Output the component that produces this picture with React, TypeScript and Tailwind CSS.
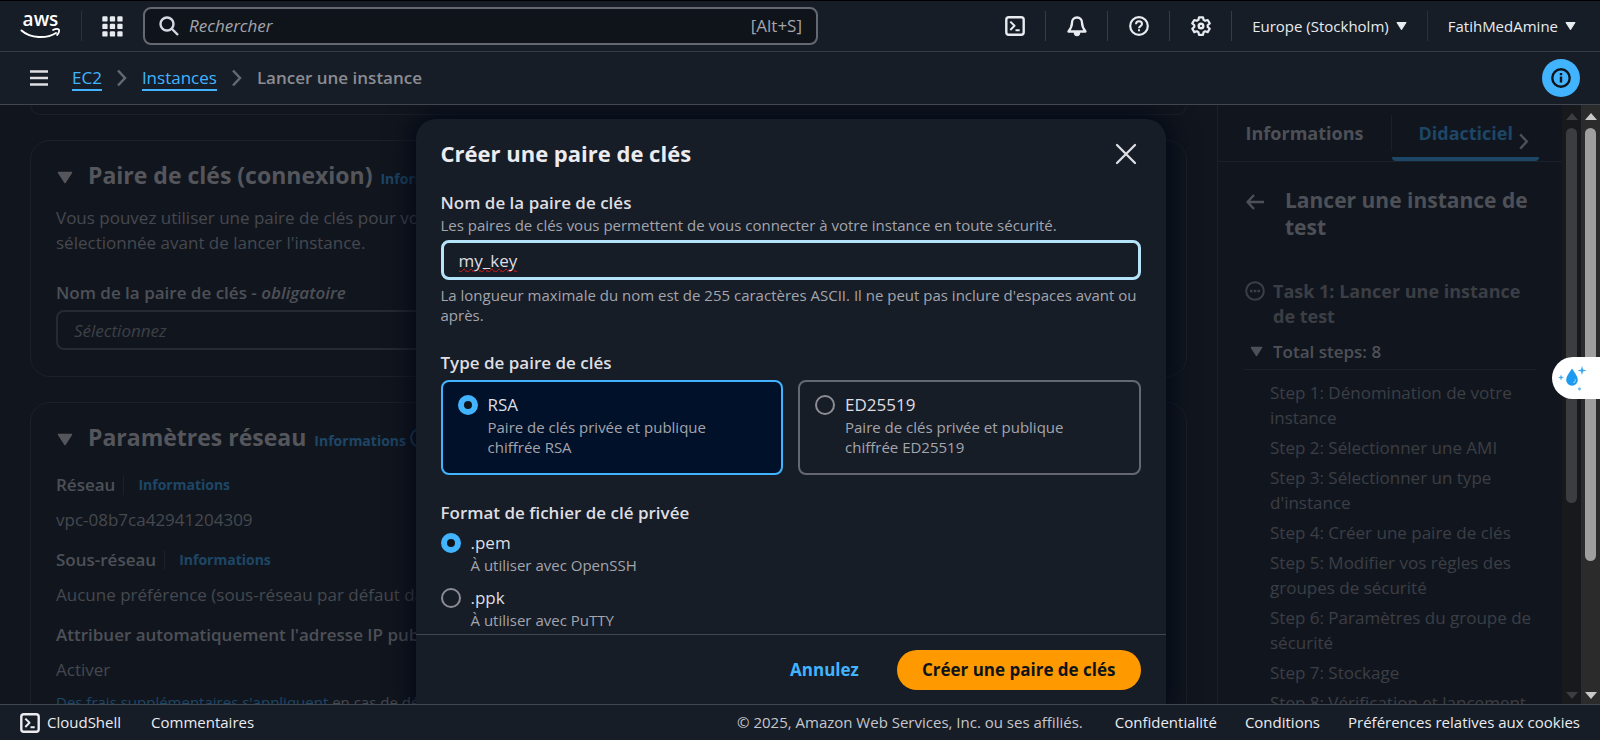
import { useState } from 'react';
import type { ReactNode } from 'react';

const steps = [
  'Step 1: Dénomination de votre instance',
  'Step 2: Sélectionner une AMI',
  "Step 3: Sélectionner un type d'instance",
  'Step 4: Créer une paire de clés',
  'Step 5: Modifier vos règles des groupes de sécurité',
  'Step 6: Paramètres du groupe de sécurité',
  'Step 7: Stockage',
  'Step 8: Vérification et lancement',
];

function AwsLogo() {
  return (
    <svg viewBox="0 0 40 36" className="h-9 w-10 overflow-visible" fill="none" aria-hidden="true">
      <text x="20.500" y="18" textAnchor="middle" fill="#ffffff" fontFamily="Open Sans, sans-serif" fontWeight="600" fontSize="19">
        aws
      </text>
      <path d="M1.500 22.500c9 8 25 8.500 34.500 2.500" stroke="#ffffff" strokeWidth="2" strokeLinecap="round" />
      <path d="M33 22c2-.9 5-1.100 5.800-.5s.2 3.800-1.700 5.500" stroke="#ffffff" strokeWidth="1.800" strokeLinecap="round" strokeLinejoin="round" />
    </svg>
  );
}

function GridIcon() {
  return (
    <svg viewBox="0 0 21 21" className="size-[21px]" fill="#e8ebf0" aria-hidden="true">
      {[0, 7.5, 15].map((y) => [0, 7.5, 15].map((x) => <rect key={`${x}-${y}`} x={x + 0.3} y={y + 0.3} width="5.300" height="5.300" rx="1.200" />))}
    </svg>
  );
}

function TerminalIcon({ className }: { className: string }) {
  return (
    <svg viewBox="0 0 20 20" className={className} fill="none" stroke="currentColor" strokeWidth="2.400" strokeLinejoin="round" aria-hidden="true">
      <rect x="1.300" y="1.300" width="17.400" height="17.400" rx="2.500" />
      <path d="M5.300 5.600l4.200 4.200-4.200 4.200M10.500 14.300h4.200" strokeWidth="2" />
    </svg>
  );
}

function BellIcon() {
  return (
    <svg viewBox="0 0 20 21" className="h-[21px] w-5" fill="none" stroke="currentColor" strokeWidth="2.300" strokeLinejoin="round" aria-hidden="true">
      <path d="M10 1.500c-3.200 0-5 2.300-5 5.200 0 4-1.400 6-3.500 8.800h17c-2.100-2.800-3.500-4.800-3.500-8.800 0-2.900-1.800-5.200-5-5.200z" />
      <path d="M7.500 16.500c0 1.800 1 3 2.500 3s2.500-1.200 2.500-3z" fill="currentColor" strokeWidth="1.500" />
    </svg>
  );
}

function HelpIcon() {
  return (
    <svg viewBox="0 0 20 20" className="size-5" fill="none" stroke="currentColor" strokeWidth="2.200" aria-hidden="true">
      <circle cx="10" cy="10" r="8.800" />
      <path d="M7 8.200c0-1.800 1.300-2.900 3-2.900s3 1.100 3 2.700c0 2-3 2.200-3 4.300" strokeWidth="2" />
      <path d="M10 13.200v2" strokeWidth="2" />
    </svg>
  );
}

function GearIcon() {
  return (
    <svg viewBox="0 0 20 20" className="size-5" fill="none" stroke="currentColor" strokeWidth="2.200" strokeLinejoin="round" aria-hidden="true">
      <path d="M8 1.300h4l.6 2.600 1.500.9 2.600-.8 2 3.400-2 1.800v1.700l2 1.800-2 3.400-2.600-.8-1.500.9-.6 2.600H8l-.6-2.600-1.500-.9-2.600.8-2-3.400 2-1.800V9.200l-2-1.800 2-3.400 2.600.8 1.500-.9z" />
      <circle cx="10" cy="10" r="2.300" strokeWidth="2.400" />
    </svg>
  );
}

function Caret({ className }: { className: string }) {
  return (
    <svg viewBox="0 0 16 13" className={className} fill="currentColor" stroke="currentColor" strokeWidth="1.500" strokeLinejoin="round" aria-hidden="true">
      <path d="M1.500 1.500h13L8 11.500z" />
    </svg>
  );
}

function Chevron({ className }: { className: string }) {
  return (
    <svg viewBox="0 0 10 18" className={className} fill="none" stroke="currentColor" strokeWidth="2.500" aria-hidden="true">
      <path d="M1 1.500L8 9l-7 7.500" />
    </svg>
  );
}

function IconButton({ label, children }: { label: string; children: ReactNode }) {
  return (
    <button aria-label={label} className="flex w-[61px] items-center justify-center">
      {children}
    </button>
  );
}

function Divider() {
  return <span className="h-[30px] w-px bg-[#353c48]" />;
}

function InfoLink() {
  return (
    <a href="#informations" className="text-[14px] font-bold text-[#1e4666]">
      Informations
    </a>
  );
}

function Radio({ name, label, checked, onChange }: { name: string; label: string; checked: boolean; onChange: () => void }) {
  return (
    <input
      type="radio"
      name={name}
      aria-label={label}
      checked={checked}
      onChange={onChange}
      className="mt-[3px] size-5 shrink-0 appearance-none rounded-full border-2 border-[#8c8c94] checked:border-6 checked:border-[#42b4ff] checked:bg-[#0f141a]"
    />
  );
}

function Scrollbar({ track, thumb, arrow, height }: { track: string; thumb: string; arrow: string; height: string }) {
  return (
    <div className={`flex w-[19px] shrink-0 flex-col items-center justify-between ${track}`}>
      <div className="flex h-full min-h-0 flex-col items-center pt-2">
        <svg viewBox="0 0 12 7" className={`h-[7px] w-3 shrink-0 ${arrow}`} fill="currentColor" aria-hidden="true">
          <path d="M6 0l6 7H0z" />
        </svg>
        <span className={`mt-2 w-[11px] rounded-full ${height} ${thumb}`} />
      </div>
      <svg viewBox="0 0 12 7" className={`mb-[5px] h-[7px] w-3 shrink-0 ${arrow}`} fill="currentColor" aria-hidden="true">
        <path d="M0 0h12L6 7z" />
      </svg>
    </div>
  );
}

function TopBar() {
  return (
    <header className="flex h-[52px] shrink-0 items-center border-t border-b border-t-black border-b-[#353c48] bg-[#161d26] pr-6 pl-5 text-[#e8ebf0]">
      <a href="#home" aria-label="aws">
        <AwsLogo />
      </a>
      <span className="ml-[21px] h-[30px] w-px bg-[#2a313c]" />
      <button aria-label="Services" className="ml-5">
        <GridIcon />
      </button>
      <label className="ml-5 flex h-[38px] w-[675px] items-center rounded-lg border-2 border-[#656871] bg-[#0f141a] px-3.5">
        <svg viewBox="0 0 20 20" className="size-5 text-[#d5d9e2]" fill="none" stroke="currentColor" strokeWidth="2.400" aria-hidden="true">
          <circle cx="8" cy="8" r="6.500" />
          <path d="M12.500 12.500l6.500 6.500" />
        </svg>
        <input aria-label="Rechercher" placeholder="Rechercher" className="ml-2.5 min-w-0 flex-1 bg-transparent text-[17px] italic outline-none placeholder:text-[#a4a4ad]" />
        <span className="text-[17px] text-[#a4a4ad]">[Alt+S]</span>
      </label>
      <nav className="ml-auto flex items-center text-[15px]">
        <IconButton label="CloudShell">
          <TerminalIcon className="size-5" />
        </IconButton>
        <Divider />
        <IconButton label="Notifications">
          <BellIcon />
        </IconButton>
        <Divider />
        <IconButton label="Aide">
          <HelpIcon />
        </IconButton>
        <Divider />
        <IconButton label="Paramètres">
          <GearIcon />
        </IconButton>
        <Divider />
        <button className="flex items-center gap-[7px] px-5">
          Europe (Stockholm)
          <Caret className="h-2.5 w-[11px]" />
        </button>
        <span className="h-[30px] w-px bg-[#2a313c]" />
        <button className="flex items-center gap-[7px] pl-5">
          FatihMedAmine
          <Caret className="h-2.5 w-[11px]" />
        </button>
      </nav>
    </header>
  );
}

function Breadcrumbs() {
  return (
    <div className="flex h-[53px] shrink-0 items-center border-b border-[#424650] bg-[#161d26] pr-5 pl-[30px] text-[17px]">
      <button aria-label="Menu">
        <svg viewBox="0 0 18 16" className="h-4 w-[18px]" stroke="#dedee3" strokeWidth="2.400" aria-hidden="true">
          <path d="M0 1.500h18M0 8h18M0 14.500h18" />
        </svg>
      </button>
      <nav aria-label="Fil d'Ariane" className="ml-6 flex items-center leading-[22px]">
        <a href="#ec2" className="border-b-2 border-[#42b4ff] pt-0.5 text-[#42b4ff]">EC2</a>
        <Chevron className="mx-[15px] h-[18px] w-2.5 text-[#656871]" />
        <a href="#instances" className="border-b-2 border-[#42b4ff] pt-0.5 text-[#42b4ff]">Instances</a>
        <Chevron className="mx-[15px] h-[18px] w-2.5 text-[#656871]" />
        <span className="font-semibold text-[#8c8c94]">Lancer une instance</span>
      </nav>
      <button aria-label="Informations" className="ml-auto flex size-[38px] items-center justify-center rounded-full bg-[#42b4ff] text-[#0f141a]">
        <svg viewBox="0 0 20 20" className="size-5" fill="none" stroke="currentColor" strokeWidth="2.400" aria-hidden="true">
          <circle cx="10" cy="10" r="8.700" />
          <path d="M10 8.500V14.500M10 5v2.200" />
        </svg>
      </button>
    </div>
  );
}

function LaunchForm() {
  return (
    <section className="flex min-w-0 flex-1 flex-col gap-[25px] overflow-hidden px-[30px] text-[17px] leading-[25px] text-[#46484f]">
      <div className="h-2.5 shrink-0 rounded-b-[20px] border border-t-0 border-[#1b212a]" />
      <div className="h-[237px] shrink-0 rounded-[20px] border border-[#1b212a] px-[25px] pt-[19px]">
        <div className="flex items-baseline">
          <Caret className="h-[13px] w-[18px] text-[#55565c]" />
          <h2 className="ml-3.5 text-[23px] leading-[30px] font-bold text-[#55565c]">Paire de clés (connexion)</h2>
          <span className="ml-2">
            <InfoLink />
          </span>
        </div>
        <p className="mt-3.5 w-[1100px]">
          Vous pouvez utiliser une paire de clés pour vous connecter en toute sécurité à votre instance. Assurez-vous d'avoir accès à la paire de clés
          sélectionnée avant de lancer l'instance.
        </p>
        <label htmlFor="pair" className="mt-[25px] block font-semibold text-[#4e5057]">
          Nom de la paire de clés - <em>obligatoire</em>
        </label>
        <input id="pair" placeholder="Sélectionnez" className="mt-[5px] block h-10 w-full rounded-lg border-2 border-[#262a32] bg-transparent px-4 italic placeholder:text-[#3e4047]" />
      </div>
      <div className="min-h-[400px] shrink-0 rounded-[20px] border border-[#1b212a] px-[25px] pt-[19px]">
        <div className="flex items-baseline">
          <Caret className="h-[13px] w-[18px] text-[#55565c]" />
          <h2 className="ml-3.5 text-[23px] leading-[30px] font-bold text-[#55565c]">Paramètres réseau</h2>
          <span className="mr-1 ml-2">
            <InfoLink />
          </span>
          <span className="size-5 self-center rounded-full border-2 border-[#1e4666]" />
        </div>
        <div className="mt-[19px] flex items-center">
          <h3 className="mr-2 font-semibold text-[#4e5057]">Réseau</h3>
          <span className="mr-3.5 h-5 w-px bg-[#1b212a]" />
          <InfoLink />
        </div>
        <p className="mt-2.5">vpc-08b7ca42941204309</p>
        <div className="mt-[15px] flex items-center">
          <h3 className="mr-2 font-semibold text-[#4e5057]">Sous-réseau</h3>
          <span className="mr-3.5 h-5 w-px bg-[#1b212a]" />
          <InfoLink />
        </div>
        <p className="mt-2.5">Aucune préférence (sous-réseau par défaut dans n'importe quelle zone)</p>
        <h3 className="mt-[15px] font-semibold text-[#4e5057]">Attribuer automatiquement l'adresse IP publique</h3>
        <p className="mt-2.5">Activer</p>
        <p className="mt-2 text-[15px]">
          <a href="#frais" className="text-[#1e4666]">Des frais supplémentaires s'appliquent</a> en cas de dépassement
        </p>
      </div>
    </section>
  );
}

function TutorialPanel() {
  return (
    <aside className="w-[345px] shrink-0 overflow-hidden border-l border-[#1b212a] text-[17px] leading-[25px] text-[#3c3e45]">
      <div className="flex h-[57px] items-stretch border-b border-[#1b212a] text-[18px] font-bold">
        <button className="w-[173px] text-[#4e5057]">Informations</button>
        <span className="mt-2.5 h-9 w-px bg-[#1b212a]" />
        <div className="flex w-[147px] items-center justify-end rounded-sm border-b-4 border-[#1e4666] pr-2.5">
          <button className="pt-1 text-[#1e4666]">Didacticiel</button>
          <Chevron className="mt-5 ml-1.5 h-[17px] w-2.5 text-[#4e5057]" />
        </div>
      </div>
      <div className="flex pt-[25px] pl-7">
        <svg viewBox="0 0 18 16" className="mt-[7px] h-4 w-[18px] shrink-0" fill="none" stroke="#4e5057" strokeWidth="2.300" aria-hidden="true">
          <path d="M8 1L1.500 8 8 15M1.500 8H18" />
        </svg>
        <h2 className="ml-[21px] w-[260px] text-[21px] leading-[27px] font-bold text-[#4e5057]">Lancer une instance de test</h2>
      </div>
      <div className="mt-[38px] flex pl-[27px]">
        <svg viewBox="0 0 20 20" className="mt-0.5 size-5 shrink-0" fill="none" stroke="currentColor" strokeWidth="2" aria-hidden="true">
          <circle cx="10" cy="10" r="8.800" />
          <path d="M5 10h2.500M8.800 10h2.500M12.500 10H15" strokeWidth="2.400" />
        </svg>
        <h3 className="ml-2 w-[270px] text-[18px] font-bold">Task 1: Lancer une instance de test</h3>
      </div>
      <button className="mr-7 ml-[26px] flex w-[292px] items-center border-b border-[#1b212a] pt-2.5 pb-[5px] pl-1.5 text-[#4e5057]">
        <Caret className="h-[11px] w-[13px]" />
        <span className="ml-2.5 font-semibold">Total steps: 8</span>
      </button>
      <ul className="ml-[52px] flex w-[268px] flex-col gap-[5px] pt-2.5">
        {steps.map((step) => (
          <li key={step}>{step}</li>
        ))}
      </ul>
    </aside>
  );
}

function KeyPairDialog() {
  const [type, setType] = useState('rsa');
  const [format, setFormat] = useState('pem');
  const types = [
    { id: 'rsa', title: 'RSA', text: 'Paire de clés privée et publique chiffrée RSA' },
    { id: 'ed25519', title: 'ED25519', text: 'Paire de clés privée et publique chiffrée ED25519' },
  ];
  const formats = [
    { id: 'pem', title: '.pem', text: 'À utiliser avec OpenSSH' },
    { id: 'ppk', title: '.ppk', text: 'À utiliser avec PuTTY' },
  ];
  return (
    <div role="dialog" aria-labelledby="dialog-title" className="flex w-[750px] flex-col rounded-t-[20px] bg-[#161d26] text-[17px] leading-[25px] text-[#dedee3] shadow-[0_0_24px_8px_rgba(0,7,22,0.75)]">
      <div className="flex h-[71px] shrink-0 items-start justify-between px-[25px] pt-[19px]">
        <h1 id="dialog-title" className="text-[22px] leading-[30px] font-bold text-[#ebebf0]">Créer une paire de clés</h1>
        <button aria-label="Fermer" className="mt-[5px] mr-1 text-[#dedee3]">
          <svg viewBox="0 0 22 22" className="size-[22px]" fill="none" stroke="currentColor" strokeWidth="2.300" strokeLinecap="round" aria-hidden="true">
            <path d="M2 2l18 18M20 2L2 20" />
          </svg>
        </button>
      </div>
      <div className="min-h-0 flex-1 overflow-hidden px-[25px]">
        <label htmlFor="key-name" className="block font-semibold">Nom de la paire de clés</label>
        <p className="text-[15px] leading-5 text-[#a4a4ad]">Les paires de clés vous permettent de vous connecter à votre instance en toute sécurité.</p>
        <div className="mt-[5px] flex h-10 items-center rounded-lg border-[3px] border-[#b5e3fa] px-[15px]">
          <input
            id="key-name"
            defaultValue="my_key"
            className="h-full w-full bg-transparent text-[#dedee3] underline decoration-[#e01818] decoration-wavy decoration-1 underline-offset-1 outline-none [text-decoration-skip-ink:none]"
          />
        </div>
        <p className="mt-[5px] text-[15px] leading-5 text-[#a4a4ad]">La longueur maximale du nom est de 255 caractères ASCII. Il ne peut pas inclure d'espaces avant ou après.</p>
        <fieldset className="mt-[25px]">
          <legend className="font-semibold">Type de paire de clés</legend>
          <div className="mt-[5px] grid grid-cols-2 gap-[15px]">
            {types.map((t) => (
              <label key={t.id} className="flex h-[95px] rounded-lg border-2 border-[#656871] px-[15px] pt-2.5 has-checked:border-[#42b4ff] has-checked:bg-[#001129]">
                <Radio name="type" label={t.title} checked={type === t.id} onChange={() => setType(t.id)} />
                <span className="ml-2.5">
                  <span className="block">{t.title}</span>
                  <span className="block w-[240px] text-[15px] leading-5 text-[#a4a4ad]">{t.text}</span>
                </span>
              </label>
            ))}
          </div>
        </fieldset>
        <fieldset className="mt-[25px]">
          <legend className="font-semibold">Format de fichier de clé privée</legend>
          <div className="mt-[5px] flex flex-col gap-2.5">
            {formats.map((f) => (
              <label key={f.id} className="flex">
                <Radio name="format" label={f.title} checked={format === f.id} onChange={() => setFormat(f.id)} />
                <span className="ml-2.5">
                  <span className="block">{f.title}</span>
                  <span className="block text-[15px] leading-5 text-[#a4a4ad]">{f.text}</span>
                </span>
              </label>
            ))}
          </div>
        </fieldset>
      </div>
      <div className="flex h-[70px] shrink-0 items-center justify-end gap-[38px] border-t border-[#424650] px-[25px] font-bold">
        <button className="text-[#42b4ff]">Annulez</button>
        <button className="h-10 rounded-full bg-[#ff9900] px-[25px] text-[#0f141a]">Créer une paire de clés</button>
      </div>
    </div>
  );
}

function FooterBar() {
  return (
    <footer className="flex h-9 shrink-0 items-center border-t border-[#424650] bg-[#161d26] px-5 text-[15px] text-[#ebebf0]">
      <button className="flex items-center gap-[7px]">
        <TerminalIcon className="size-5" />
        CloudShell
      </button>
      <button className="ml-[30px]">Commentaires</button>
      <span className="ml-auto text-[#c6c6cd]">© 2025, Amazon Web Services, Inc. ou ses affiliés.</span>
      <a href="#confidentialite" className="ml-8">Confidentialité</a>
      <a href="#conditions" className="ml-7">Conditions</a>
      <a href="#cookies" className="ml-7">Préférences relatives aux cookies</a>
    </footer>
  );
}

export default function App() {
  return (
    <div className="flex h-screen flex-col overflow-hidden bg-[#11161e] font-['Open_Sans',sans-serif]">
      <TopBar />
      <Breadcrumbs />
      <div className="relative flex min-h-0 flex-1">
        <main className="relative flex min-w-0 flex-1">
          <LaunchForm />
          <TutorialPanel />
          <Scrollbar track="bg-[#18191c]" thumb="bg-[#3c3d41]" arrow="text-[#3c3d41]" height="h-[375px]" />
          <div className="absolute inset-0 flex justify-center overflow-hidden pt-3.5">
            <KeyPairDialog />
          </div>
        </main>
        <Scrollbar track="bg-[#2b2b2b]" thumb="bg-[#9f9f9f]" arrow="text-[#c8c8c8]" height="h-[433px]" />
        <button aria-label="Assistant" className="absolute top-[252px] right-0 flex h-[42px] w-12 items-center rounded-l-full bg-white pl-1.5">
          <svg viewBox="0 0 30 30" className="size-[30px]" fill="#1d9bf0" aria-hidden="true">
            <path d="M14 5.500c3 4.500 5.800 8 5.800 11.500a5.800 5.800 0 0 1-11.600 0C8.200 13.500 11 10 14 5.500z" />
            <path d="M16.800 15.500c.8 2-.2 4-2 4.500 2.400.3 3.600-2.500 2-4.500z" fill="#ffffff" />
            <path d="M24 3l1.100 3.400L28.500 7.500l-3.400 1.100L24 12l-1.100-3.400-3.400-1.100 3.400-1.100zM3 11.500l.8 2.200 2.200.8-2.200.8L3 17.500l-.8-2.200L0 14.500l2.200-.8z" opacity="0.850" />
            <circle cx="21.500" cy="26" r="1.400" opacity="0.700" />
          </svg>
        </button>
      </div>
      <FooterBar />
    </div>
  );
}
